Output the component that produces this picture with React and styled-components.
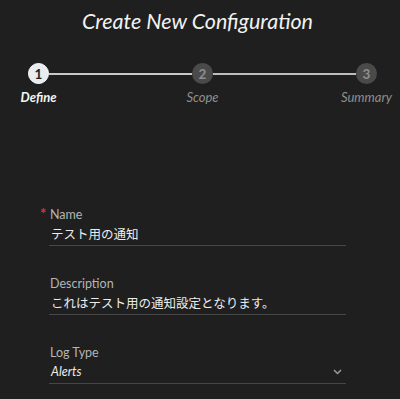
import React from 'react';
import styled, { createGlobalStyle } from 'styled-components';

const GlobalStyle = createGlobalStyle`
  html, body {
    margin: 0;
    padding: 0;
    background: #1f1f1f;
  }
  body {
    font-family: Lato, "Noto Sans CJK JP", sans-serif;
    color: #e6e6e6;
  }
`;

const Page = styled.div`
  width: 400px;
  height: 399px;
  background: #1f1f1f;
  overflow: hidden;
`;

const Title = styled.h1`
  margin: 0;
  padding: 9px 5px 0 0;
  text-align: center;
  font-family: Lato, sans-serif;
  font-style: italic;
  font-weight: 400;
  font-size: 21.5px;
  line-height: 24px;
  color: #f2f2f2;
`;

const Stepper = styled.div`
  display: flex;
  align-items: flex-start;
  margin: 30px 23px 0 28px;
`;

const Step = styled.div`
  display: flex;
  flex-direction: column;
  align-items: center;
  width: 21px;
  flex: none;
`;

const Circle = styled.div`
  width: 21px;
  height: 21px;
  border-radius: 50%;
  display: flex;
  align-items: center;
  justify-content: center;
  box-sizing: border-box;
  font-family: Lato, sans-serif;
  font-weight: 700;
  font-size: 13.5px;
  background: ${p => (p.$active ? '#e8edf1' : '#4a4a4a')};
  color: ${p => (p.$active ? '#1f1f1f' : '#8e8e8e')};
  border: ${p => (p.$active ? '1px solid #ffffff' : 'none')};
`;

const StepLabel = styled.div`
  margin-top: 5px;
  white-space: nowrap;
  font-family: Lato, sans-serif;
  font-style: italic;
  font-size: 13px;
  line-height: 16px;
  font-weight: ${p => (p.$active ? 700 : 400)};
  color: ${p => (p.$active ? '#f5f5f5' : '#8f8f8f')};
`;

const Connector = styled.div`
  flex: 1;
  height: 2px;
  margin-top: 9.5px;
  background: ${p => p.$color};
`;

const Form = styled.div`
  display: flex;
  flex-direction: column;
  gap: 30px;
  margin: 101px 54px 0 49px;
`;

const Field = styled.div`
  display: flex;
  flex-direction: column;
`;

const LabelRow = styled.div`
  display: flex;
  align-items: baseline;
  font-family: Lato, sans-serif;
  font-size: 12.5px;
  line-height: 15px;
  color: #b5b5b5;
  padding-left: 1px;
`;

const Required = styled.span`
  width: 10px;
  margin-left: -10px;
  color: #d8333a;
  font-size: 15px;
  font-weight: 700;
`;

const Value = styled.div`
  display: flex;
  align-items: center;
  justify-content: space-between;
  height: 23px;
  padding: 0 4px 0 2px;
  border-bottom: 1px solid #474747;
  font-family: Lato, "Noto Sans CJK JP", sans-serif;
  font-size: 12.5px;
  font-style: ${p => (p.$italic ? 'italic' : 'normal')};
  color: #ececec;
`;

const Chevron = () => (
  <svg width="9" height="6" viewBox="0 0 9 6" fill="none">
    <polyline points="1,1 4.5,4.5 8,1" stroke="#9a9a9a" strokeWidth="1.5" />
  </svg>
);

const steps = [
  { n: 1, label: 'Define', active: true },
  { n: 2, label: 'Scope' },
  { n: 3, label: 'Summary' },
];

export default function App() {
  return (
    <Page>
      <GlobalStyle />
      <Title>Create New Configuration</Title>
      <Stepper>
        {steps.map((s, i) => (
          <React.Fragment key={s.n}>
            {i > 0 && <Connector $color={i === 1 ? '#c9c9c9' : '#bdbdbd'} />}
            <Step>
              <Circle $active={s.active}>{s.n}</Circle>
              <StepLabel $active={s.active}>{s.label}</StepLabel>
            </Step>
          </React.Fragment>
        ))}
      </Stepper>
      <Form>
        <Field>
          <LabelRow>
            <Required>*</Required>
            Name
          </LabelRow>
          <Value>テスト用の通知</Value>
        </Field>
        <Field>
          <LabelRow>Description</LabelRow>
          <Value>これはテスト用の通知設定となります。</Value>
        </Field>
        <Field>
          <LabelRow>Log Type</LabelRow>
          <Value $italic>
            Alerts
            <Chevron />
          </Value>
        </Field>
      </Form>
    </Page>
  );
}
